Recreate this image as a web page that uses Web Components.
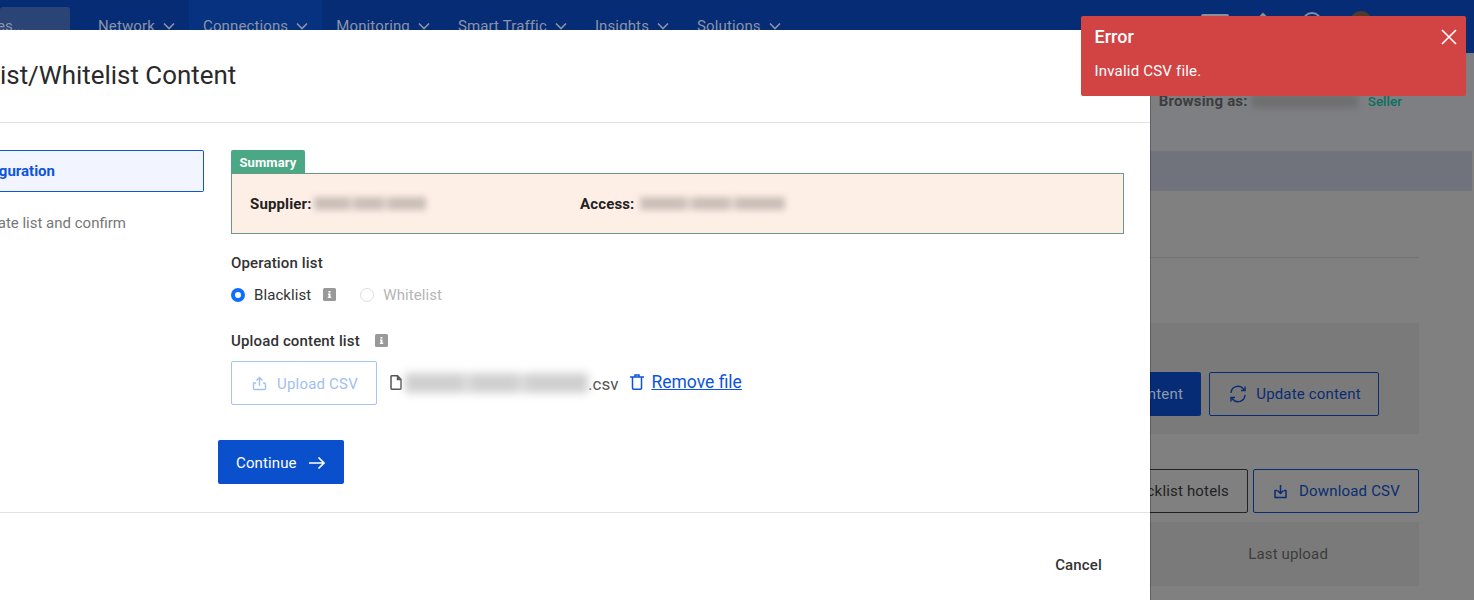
<!DOCTYPE html>
<html><head><meta charset="utf-8"><style>
html,body{margin:0;padding:0;height:600px;overflow:hidden;background:#808080;font-family:Roboto,"Liberation Sans",sans-serif}
</style></head><body>
<app-shell></app-shell>
<script>
const chev='<svg width="12" height="8" viewBox="0 0 12 8" fill="none" stroke="currentColor" stroke-width="1.6"><path d="M1 1.500 6 6.500 11 1.500"/></svg>';
const info='<svg width="13" height="13" viewBox="0 0 13 13"><rect width="13" height="13" rx="1.500" fill="#999"/><rect x="5.500" y="3" width="2" height="1.600" fill="#fff"/><path d="M5 5.600h2.500v3.200h.8V10H4.800V8.800h.8V6.700H5z" fill="#fff"/></svg>';
function def(name,html){customElements.define(name,class extends HTMLElement{constructor(){super();this.attachShadow({mode:'open'}).innerHTML=html}})}

def('nav-item',`<style>:host{display:flex;align-items:center;gap:8px;font-size:15px;letter-spacing:.13px;color:#8b94a8;height:53px;padding:0 14px 2px;box-sizing:border-box;white-space:nowrap}:host([active]){background:#07327f}svg{flex:none;margin-top:1px}</style><slot></slot>${chev}`);

def('top-bar',`<style>
:host{display:flex;height:53px;background:#052c75;align-items:flex-start;box-sizing:border-box}
.search{width:70px;height:46px;margin-top:7px;background:#2a4476;border-radius:3px;color:#8b94a8;font-size:15px;line-height:38px;overflow:hidden;flex:none;white-space:nowrap;text-indent:-3px}
.items{display:flex;margin-left:14px}
.tools{display:flex;align-items:flex-start;margin-left:auto;margin-right:102px}
.box{width:28px;height:22px;margin-top:14px;background:#8a8f9a;border-radius:2px}
.dia{width:12px;height:12px;margin:15px 0 0 28px;background:#8a8f9a;transform:rotate(45deg)}
.ring{width:20px;height:20px;margin:12px 0 0 33px;border:2px solid #8a8f9a;border-radius:50%;box-sizing:border-box}
.ava{width:22px;height:22px;margin:11px 0 0 28px;border-radius:50%;background:#4f3a2c}
</style><div class="search">es...</div><div class="items"><nav-item>Network</nav-item><nav-item active>Connections</nav-item><nav-item>Monitoring</nav-item><nav-item>Smart Traffic</nav-item><nav-item>Insights</nav-item><nav-item>Solutions</nav-item></div><div class="tools"><div class="box"></div><div class="dia"></div><div class="ring"></div><div class="ava"></div></div>`);

def('bg-button',`<style>:host{display:inline-flex;align-items:center;justify-content:center;gap:9px;height:44px;box-sizing:border-box;border:1px solid currentColor;border-radius:2px;font-size:15px;letter-spacing:.17px;color:#0a2d72;white-space:nowrap;flex:none}</style><slot></slot>`);

def('back-page',`<style>
:host{display:block;height:547px;background:#808080;color:#3a3a3a}
.top{background:#7e7f83;height:98px;display:flex;justify-content:flex-end;align-items:center;padding:0 72px 2px 0;font-size:15px;box-sizing:border-box;gap:4px;letter-spacing:.2px}
.top b{color:#3d3d3d}
.top .blur{width:106px;height:14px;background:#6f6f70;filter:blur(3px);margin-right:6px}
.top .s{color:#0c6f5f;font-size:13.500px;font-weight:500;letter-spacing:0}
.band{height:40px;background:#70737b;margin-right:2px}
.wrap{margin-left:1150px;width:269px}
.rule{height:1px;background:#737373;margin-top:66px}
.panel{height:111px;background:#7a7a7a;margin-top:65px;display:flex;align-items:flex-end;gap:8px;padding-bottom:18px;box-sizing:border-box}
.dark{background:#052c75;color:#8f9ab0;border-radius:0 2px 2px 0;width:51px;height:44px;display:flex;align-items:center;font-size:15px;letter-spacing:.17px;overflow:hidden;justify-content:flex-end;padding-right:18px;box-sizing:border-box;flex:none;white-space:nowrap}
.row{display:flex;gap:5px;margin-top:35px}
.last{height:64px;background:#7a7a7a;margin-top:9px;display:flex;align-items:center;justify-content:flex-end;padding-right:91px;font-size:15px;letter-spacing:.15px;color:#3c3c3c}
svg{flex:none}
</style>
<div class="top"><b>Browsing as:</b><span class="blur"></span><span class="s">Seller</span></div>
<div class="band"></div>
<div class="wrap">
<div class="rule"></div>
<div class="panel"><div class="dark">ntent</div><bg-button style="width:170px;padding-left:2px"><svg width="18" height="18" viewBox="0 0 18 18" fill="none" stroke="currentColor" stroke-width="1.400"><path d="M2 8A7 7 0 0 1 14.500 4L16 5.500M16 10A7 7 0 0 1 3.500 14L2 12.500"/><path d="M16 1.500V5.500H12M2 16.500V12.500H6"/></svg>Update content</bg-button></div>
<div class="row"><bg-button style="width:100px;margin-left:-2px;color:#222;justify-content:flex-end;padding-right:18px">cklist hotels</bg-button><bg-button style="width:166px;gap:11px;padding-left:1px"><svg width="15" height="15" viewBox="0 0 15 15" fill="none" stroke="currentColor" stroke-width="1.500"><path d="M7.500 1V9M4.500 6.500 7.500 9.500 10.500 6.500"/><path d="M4 6.500H2V13.500H13V6.500H11" stroke-linejoin="round"/></svg>Download CSV</bg-button></div>
<div class="last">Last upload</div>
</div>`);

def('error-toast',`<style>
:host{position:absolute;left:1081px;top:16px;width:385px;height:80px;background:#d24444;border-radius:2px;color:#fff;box-sizing:border-box;padding:10px 13.500px}
h4{margin:0;font-size:18px;font-weight:500;line-height:22px}
p{margin:15px 0 0;font-size:15px;letter-spacing:.2px;line-height:16px}
svg{position:absolute;right:9px;top:13px}
</style><h4>Error</h4><p>Invalid CSV file.</p><svg width="16" height="16" viewBox="0 0 16 16" stroke="#fff" stroke-width="1.600"><path d="M1 1 15 15M15 1 1 15"/></svg>`);

def('blur-bar',`<style>
:host{display:block;flex:none;overflow:visible}
i{display:block;height:100%;filter:blur(var(--b,3px));background:linear-gradient(90deg,var(--c) 0 30%,var(--g) 34%,var(--c) 38% 60%,var(--g) 64%,var(--c) 68% 100%)}
</style><i></i>`);

def('summary-box',`<style>
:host{display:block}
.tab{display:inline-block;height:23px;line-height:25px;background:#4aa885;color:#fff;font-size:13px;font-weight:700;letter-spacing:.1px;padding:0 8.500px;border-radius:2px 2px 0 0;box-sizing:border-box}
.box{height:61px;border:1px solid #6a9a85;background:#feefe6;display:flex;align-items:center;padding:0 18px;box-sizing:border-box;font-size:15px;letter-spacing:.15px;color:#222}
.f{display:flex;align-items:center;gap:2px}.f b{font-weight:700}
blur-bar{height:13px;--c:#cabfb8;--g:#e6d9d1}
</style><div style="height:23px;display:flex"><span class="tab">Summary</span></div><div class="box"><div class="f" style="width:330px"><b>Supplier:</b><blur-bar style="width:112px"></blur-bar></div><div class="f"><b>Access:</b><blur-bar style="width:145px;margin-left:3px"></blur-bar></div></div>`);

def('radio-row',`<style>
:host{display:flex;align-items:center;font-size:15px;letter-spacing:.08px;color:#333;height:20px}
.r{width:14px;height:14px;border-radius:50%;box-sizing:border-box;flex:none}
.on{border:4px solid #0d6efd;background:#fff}
.off{border:1px solid #ddd;background:#fff}
.l{margin-left:9px}
.g{color:#b5b5b5}
svg{margin-left:12px}
</style><span class="r on"></span><span class="l">Blacklist</span>${info}<span class="r off" style="margin-left:24px"></span><span class="l g">Whitelist</span>`);

def('upload-row',`<style>
:host{display:flex;align-items:center;font-size:17px;color:#555}
.btn{width:146px;height:44px;box-sizing:border-box;border:1px solid #a6c3f3;border-radius:2px;color:#a3c0ef;font-size:15px;letter-spacing:.2px;display:flex;align-items:center;justify-content:center;gap:10px;flex:none;margin-right:13px;padding:1px 0 0 2px}
blur-bar{width:183px;height:20px;margin-left:3px;--c:#d0d0d0;--g:#e0e0e0;--b:4.500px}
.csv{margin-top:1px}
.tr{margin-left:12px;margin-top:-3px;flex:none}
a{color:#0d55d9;margin-left:7px;font-size:17.500px;text-decoration:underline;margin-top:-3px;white-space:nowrap}
.file{flex:none;margin-top:-2px}
</style><div class="btn"><svg width="15" height="15" viewBox="0 0 15 15" fill="none" stroke="currentColor" stroke-width="1.400"><path d="M7.500 10V1.500M4.500 4.500 7.500 1.500 10.500 4.500"/><path d="M4 7H1.500V12.500Q1.500 13.500 2.500 13.500H12.500Q13.500 13.500 13.500 12.500V8.500Q13.500 7 12 7H11" stroke-linejoin="round"/></svg><span>Upload CSV</span></div>
<svg class="file" width="12" height="15" viewBox="0 0 12 15" fill="none" stroke="#555" stroke-width="1.500"><path d="M1 1.500C1 1 1.300.8 1.800.8H7.500L11 4.300V13.500C11 14 10.700 14.200 10.200 14.200H1.800C1.300 14.200 1 14 1 13.500Z"/><path d="M7.500 1V4.500H11" fill="#555"/></svg>
<blur-bar></blur-bar><span class="csv">.csv</span>
<svg class="tr" width="14" height="16" viewBox="0 0 14 16" fill="none" stroke="#0d55d9" stroke-width="1.500"><path d="M0 3H14M5 3V1H9V3M2.500 3.500V14C2.500 14.800 2.800 15.200 3.500 15.200H10.500C11.200 15.200 11.500 14.800 11.500 14V3.500"/></svg><a>Remove file</a>`);

def('step-item',`<style>
:host{display:flex;align-items:center;box-sizing:border-box;font-size:15px;white-space:nowrap;justify-content:flex-end}
:host([active]){height:42px;border:1px solid #0d55d9;border-left:0;background:#f2f5ff;color:#0d55d9;font-weight:700;border-radius:0 2px 2px 0;padding-right:148px}
:host(:not([active])){color:#777;height:20px;margin-top:21px;padding-right:78px}
</style><slot></slot>`);

def('primary-btn',`<style>:host{display:inline-flex;align-items:center;gap:11px;height:44px;width:126px;box-sizing:border-box;padding:1px 0 0 18px;background:#0a50cc;color:#fff;border-radius:2px;font-size:15px;letter-spacing:.12px}</style><slot></slot><svg width="18" height="14" viewBox="0 0 18 14" fill="none" stroke="#fff" stroke-width="1.700"><path d="M1 7H16M10.500 1.500 16 7 10.500 12.500"/></svg>`);

def('modal-panel',`<style>
:host{position:absolute;left:0;top:30px;width:1150px;height:570px;background:#fff;display:block;color:#2a2a2a;overflow:hidden;box-shadow:1px 0 0 rgba(0,0,0,.25)}
.title{height:93px;box-sizing:border-box;border-bottom:1px solid #e2e2e2;font-size:25.900px;line-height:30px;padding-top:30px;white-space:nowrap}
.title span{display:inline-block;margin-left:-69.500px}
.body{display:flex;height:390px;border-bottom:1px solid #e2e2e2;box-sizing:border-box}
.steps{width:204px;padding-top:27px;flex:none;box-sizing:border-box}
.main{width:893px;margin-left:27px;padding-top:27px;flex:none}
.lbl{font-size:15px;letter-spacing:.15px;font-weight:500;color:#333;line-height:18px;display:flex;align-items:center}
.lbl svg{margin-left:15px;margin-top:-2px}
.cont{margin:35px 0 0 -13px}
.foot{display:flex;justify-content:flex-end;padding:43px 48px 0 0;font-size:15px;letter-spacing:.15px;font-weight:500;color:#333}
</style>
<div class="title"><span>Blacklist/Whitelist Content</span></div>
<div class="body"><div class="steps"><step-item active>Configuration</step-item><step-item>Update list and confirm</step-item></div>
<div class="main"><summary-box></summary-box>
<div class="lbl" style="margin-top:20px">Operation list</div>
<radio-row style="margin-top:12.500px"></radio-row>
<div class="lbl" style="margin-top:27.500px">Upload content list${info}</div>
<upload-row style="margin-top:11px"></upload-row>
<div class="cont"><primary-btn>Continue</primary-btn></div>
</div></div>
<div class="foot">Cancel</div>`);

def('app-shell',`<style>:host{display:block;position:relative;width:1474px;height:600px;overflow:hidden}</style><top-bar></top-bar><back-page></back-page><modal-panel></modal-panel><error-toast></error-toast>`);
</script>
</body></html>
